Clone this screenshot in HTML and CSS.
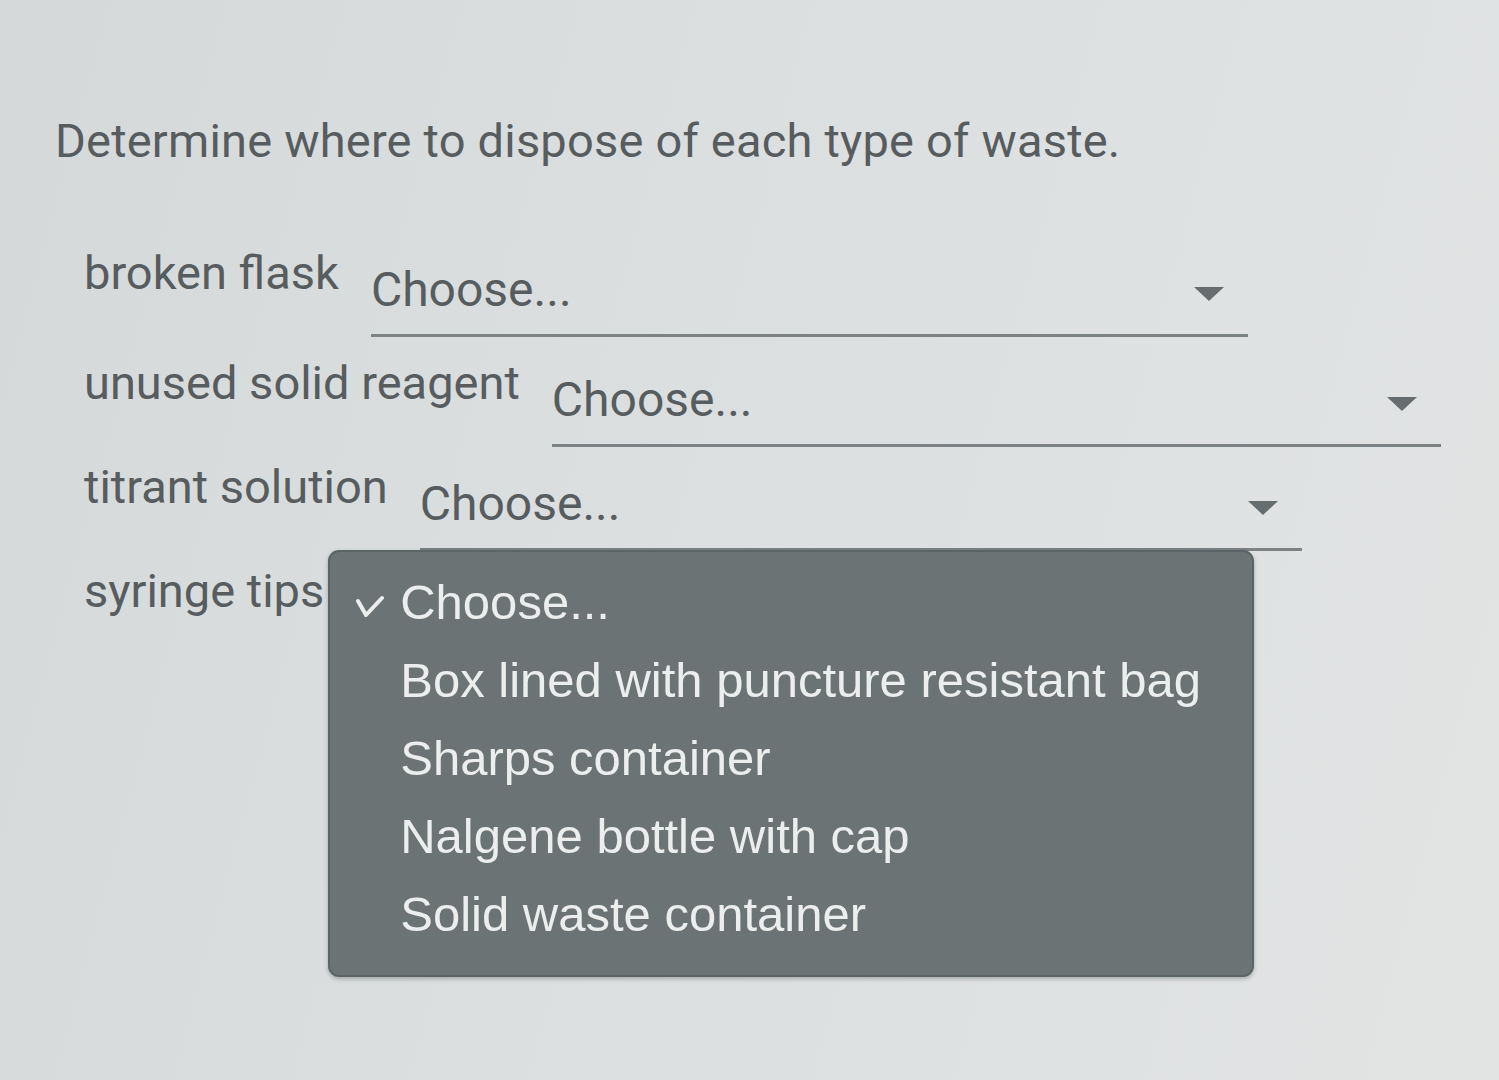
FILE: index.html
```html
<!DOCTYPE html>
<html lang="en">
<head>
<meta charset="utf-8">
<title>Waste disposal</title>
<link rel="stylesheet" href="styles.css">
</head>
<body>
<main class="page">
  <h1 class="prompt">Determine where to dispose of each type of waste.</h1>
  <div class="rows">
    <div class="row">
      <span class="label">broken flask</span>
      <div class="select select--flask"><span class="value">Choose...</span><span class="caret"></span></div>
    </div>
    <div class="row">
      <span class="label">unused solid reagent</span>
      <div class="select select--reagent"><span class="value">Choose...</span><span class="caret"></span></div>
    </div>
    <div class="row">
      <span class="label">titrant solution</span>
      <div class="select select--titrant"><span class="value">Choose...</span><span class="caret"></span></div>
    </div>
    <div class="row">
      <span class="label">syringe tips</span>
      <div class="anchor">
        <ul class="menu">
          <li class="item item--checked"><svg class="check" width="30" height="22" viewBox="0 0 30 22"><polyline points="3,6 11,20 27,3" fill="none" stroke="#eceeee" stroke-width="4" stroke-linecap="round" stroke-linejoin="round"/></svg>Choose...</li>
          <li class="item">Box lined with puncture resistant bag</li>
          <li class="item">Sharps container</li>
          <li class="item">Nalgene bottle with cap</li>
          <li class="item">Solid waste container</li>
        </ul>
      </div>
    </div>
  </div>
</main>
</body>
</html>
```
FILE: styles.css
```css
html, body {
  margin: 0;
  padding: 0;
}
body {
  width: 1499px;
  height: 1080px;
  overflow: hidden;
  background: linear-gradient(105deg, #d5d9da 0%, #dcdfe0 45%, #e2e4e4 100%);
  font-family: Roboto, "Liberation Sans", sans-serif;
  color: #575c5f;
}
.page {
  padding: 111px 0 0 55px;
}
.prompt {
  margin: 0;
  font-size: 47px;
  font-weight: 400;
  line-height: 60px;
  letter-spacing: 0.2px;
}
.rows {
  margin-top: 76px;
  padding-left: 29px;
  display: flex;
  flex-direction: column;
}
.row {
  display: flex;
  align-items: flex-start;
  height: 104px;
}
.row:first-child {
  height: 110px;
}
.label {
  font-size: 47px;
  line-height: 52px;
  white-space: nowrap;
}
.select {
  margin-left: 32px;
  margin-top: 17px;
  height: 73px;
  border-bottom: 3px solid #7d8284;
  display: flex;
  align-items: flex-start;
  justify-content: space-between;
  box-sizing: border-box;
}
.select--flask { width: 877px; }
.select--reagent { width: 889px; }
.select--titrant { width: 882px; }
.value {
  font-size: 48px;
  line-height: 52px;
  color: #575c5f;
}
.caret {
  width: 0;
  height: 0;
  margin: 23px 24px 0 0;
  border-left: 15px solid transparent;
  border-right: 15px solid transparent;
  border-top: 14px solid #676c6e;
}
.anchor {
  position: relative;
  margin-left: 4px;
}
.menu {
  position: absolute;
  top: -15px;
  left: 0;
  width: 926px;
  height: 427px;
  margin: 0;
  padding: 11px 0 0 0;
  box-sizing: border-box;
  list-style: none;
  background: #6c7374;
  border: 2px solid #5d6465;
  border-radius: 11px;
  box-shadow: 0 2px 4px rgba(0,0,0,0.25);
  font-family: "Liberation Sans", Arial, sans-serif;
  color: #eceeee;
}
.item {
  position: relative;
  padding-left: 70px;
  font-size: 49px;
  line-height: 78px;
  white-space: nowrap;
}
.check {
  position: absolute;
  left: 25px;
  top: 32px;
}
```
